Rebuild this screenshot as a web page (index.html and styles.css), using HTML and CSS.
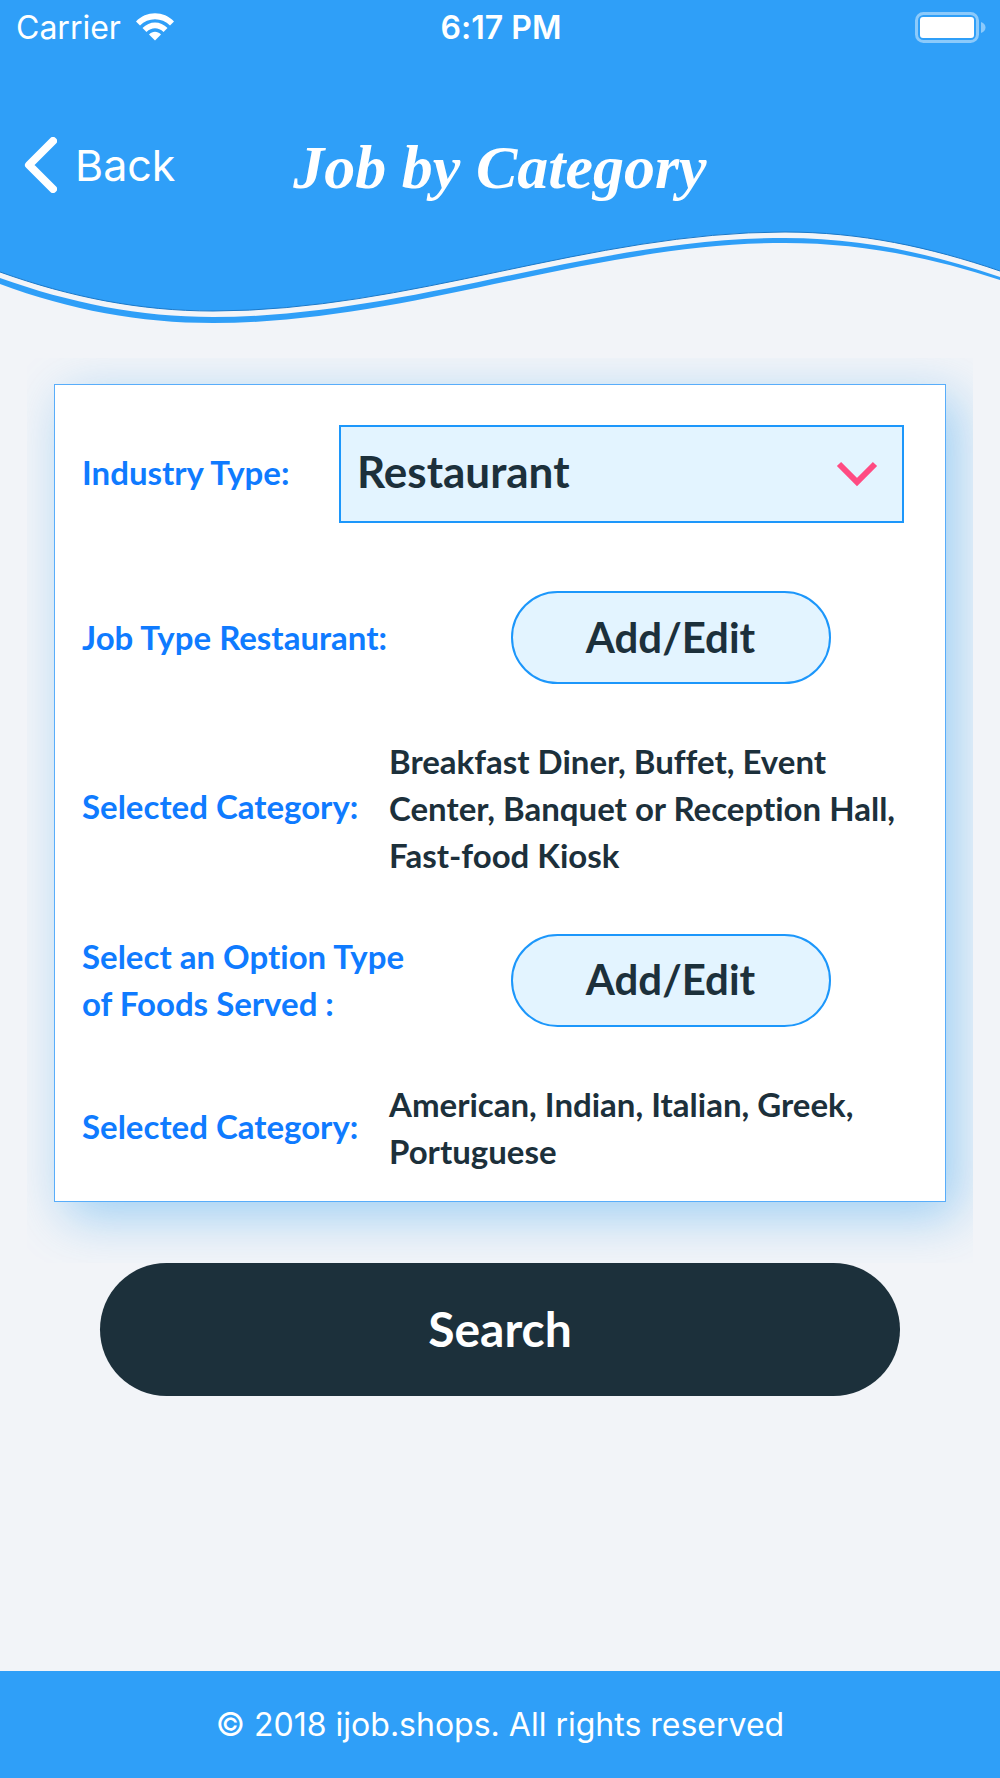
FILE: index.html
```html
<!DOCTYPE html>
<html lang="en">
<head>
<meta charset="utf-8">
<meta name="viewport" content="width=device-width, initial-scale=1">
<title>Job by Category</title>
<link rel="stylesheet" href="styles.css">
</head>
<body>
<div class="screen">
  <header class="header">
    <div class="status">
      <div class="status-carrier">
        <span>Carrier</span>
        <svg class="wifi" viewBox="0 0 38 28" aria-hidden="true">
          <path d="M0 8.5C10-2.5 28-2.5 38 8.500L34 12.500C26 4 12 4 4 12.500Z"/>
          <path d="M6.500 15C13.500 7.500 24.500 7.500 31.500 15L27.500 19C22.500 14 15.500 14 10.500 19Z"/>
          <path d="M13 21.500C16.500 17.800 21.500 17.800 25 21.500L19 27.500Z"/>
        </svg>
      </div>
      <time class="status-time">6:17 PM</time>
      <svg class="battery" viewBox="0 0 71 31" aria-hidden="true">
        <rect x="1.500" y="1.500" width="61" height="28" rx="7" fill="none" stroke="#8ccafb" stroke-width="3"/>
        <rect x="5" y="5" width="54" height="21" rx="3" fill="#fff"/>
        <path d="M66 10C72 12 72 19 66 21Z" fill="#8ccafb"/>
      </svg>
    </div>
    <div class="nav">
      <a class="back" href="#">
        <svg class="back-icon" viewBox="0 0 33 56" aria-hidden="true"><path d="M29 4L5 28L29 52"/></svg>
        <span>Back</span>
      </a>
      <h1 class="title">Job by Category</h1>
    </div>
    <svg class="wave" viewBox="0 220 1000 110" preserveAspectRatio="none" aria-hidden="true">
      <path fill="#2f9ff8" d="M0 219H1000V280C930 257 860 243 785 243C590 243 410 323 213 323C140 323 70 310 0 284Z"/>
      <path fill="#f2f4f8" d="M0 272C70 297 140 311 213 311C410 311 590 232 785 232C860 232 930 247 1000 271V277C930 253 860 238 785 238C590 238 410 317 213 317C140 317 70 303 0 278Z"/>
      <path fill="none" stroke="#1a78c8" d="M0 272C70 297 140 311 213 311C410 311 590 232 785 232C860 232 930 247 1000 271"/>
    </svg>
  </header>

  <main class="main">
    <form class="form">
      <div class="card-frame">
        <div class="card">
          <div class="row row-select">
            <label class="label" for="industry">Industry Type:</label>
            <div class="select-box">
              <select class="select" id="industry">
                <option>Restaurant</option>
              </select>
              <svg class="chevron" viewBox="0 0 42 26" aria-hidden="true"><path d="M3 3L21 21L39 3"/></svg>
            </div>
          </div>
          <div class="row row-action">
            <span class="label" id="job-type">Job Type Restaurant:</span>
            <button class="pill" type="button" aria-describedby="job-type">Add/Edit</button>
          </div>
          <div class="row row-value">
            <span class="label">Selected Category:</span>
            <p class="value">Breakfast Diner, Buffet, Event<br>Center, Banquet or Reception Hall,<br>Fast-food Kiosk</p>
          </div>
          <div class="row row-action">
            <span class="label" id="food-type">Select an Option Type<br>of Foods Served :</span>
            <button class="pill" type="button" aria-describedby="food-type">Add/Edit</button>
          </div>
          <div class="row row-value">
            <span class="label">Selected Category:</span>
            <p class="value">American, Indian, Italian, Greek,<br>Portuguese</p>
          </div>
        </div>
      </div>
      <button class="search" type="submit">Search</button>
    </form>
  </main>

  <footer class="footer">© 2018 ijob.shops. All rights reserved</footer>
</div>
</body>
</html>
```
FILE: styles.css
```css
* {
  box-sizing: border-box;
}

body {
  margin: 0;
  background: #f2f4f8;
  color: #1c303b;
  font-family: Lato, sans-serif;
  font-weight: 700;
  font-variant-ligatures: none;
}

.screen {
  display: flex;
  flex-direction: column;
  min-height: 100vh;
}

.header {
  color: #fff;
  font-family: Inter, "Liberation Sans", sans-serif;
  font-weight: 400;
}

.status {
  display: grid;
  grid-template-columns: 1fr auto 1fr;
  align-items: center;
  height: 54px;
  padding: 0 14px 0 16px;
  background: #2f9ff8;
  font-size: 32px;
}

.status-carrier {
  display: flex;
  align-items: center;
  gap: 15px;
}

.wifi {
  width: 38px;
  height: 28px;
  fill: #fff;
}

.status-time {
  font-weight: 600;
}

.battery {
  width: 71px;
  height: 31px;
  justify-self: end;
}

.nav {
  display: grid;
  grid-template-columns: 1fr auto 1fr;
  align-items: center;
  height: 166px;
  padding: 56px 24px 0;
  background: #2f9ff8;
}

.back {
  display: flex;
  align-items: center;
  gap: 18px;
  color: #fff;
  font-size: 43px;
  text-decoration: none;
}

.back-icon {
  width: 33px;
  height: 56px;
  fill: none;
  stroke: #fff;
  stroke-width: 8;
  stroke-linecap: round;
  stroke-linejoin: round;
}

.title {
  margin: 0;
  padding-top: 4px;
  font-family: "Liberation Serif", serif;
  font-size: 62px;
  font-style: italic;
  font-weight: 700;
  line-height: 72px;
}

.wave {
  display: block;
  width: 100%;
  height: 110px;
}

.main {
  flex: 1;
}

.card-frame {
  margin: 28px 27px 0;
  padding: 26px 27px 61px;
  overflow: hidden;
}

.card {
  display: flex;
  flex-direction: column;
  gap: 54px;
  padding: 40px 41px 26px 27px;
  border: 1px solid #58adfa;
  background: #fff;
  box-shadow: 12px 14px 48px rgba(47, 159, 240, 0.44);
}

.row {
  display: grid;
  align-items: center;
}

.row-select {
  grid-template-columns: 257px 1fr;
  margin-bottom: 14px;
}

.row-action {
  grid-template-columns: 355px 1fr;
}

.row-value {
  grid-template-columns: 307px 1fr;
}

.label {
  padding-bottom: 4px;
  color: #0f7bff;
  font-size: 33px;
  line-height: 47px;
  white-space: nowrap;
}

.row-action .label {
  margin-bottom: -4px;
}

.value {
  margin: 0;
  font-size: 33px;
  line-height: 47px;
  white-space: nowrap;
}

.select-box {
  display: grid;
  align-items: center;
}

.select,
.chevron {
  grid-area: 1 / 1;
}

.select {
  width: 100%;
  height: 98px;
  padding: 0 72px 6px 16px;
  border: 2px solid #1c97fb;
  border-radius: 0;
  background: #e3f4ff;
  color: inherit;
  font: inherit;
  font-size: 44px;
  appearance: none;
}

.chevron {
  justify-self: end;
  width: 42px;
  height: 26px;
  margin-right: 26px;
  fill: none;
  stroke: #ff4b82;
  stroke-width: 6;
  pointer-events: none;
}

.pill {
  justify-self: center;
  width: 320px;
  height: 93px;
  padding: 0 0 2px;
  border: 2px solid #1c97fb;
  border-radius: 47px;
  background: #e3f4ff;
  color: inherit;
  font: inherit;
  font-size: 42px;
}

.search {
  position: relative;
  display: block;
  width: 80%;
  height: 133px;
  margin: 0 auto 48px;
  padding: 0 0 2px;
  border: 0;
  border-radius: 67px;
  background: #1c303b;
  color: #fff;
  font: inherit;
  font-size: 48px;
}

.footer {
  padding: 34px 24px;
  background: #2f9ff8;
  color: #fff;
  font-family: Inter, "Liberation Sans", sans-serif;
  font-size: 32px;
  font-weight: 400;
  line-height: 39px;
  text-align: center;
}
```
